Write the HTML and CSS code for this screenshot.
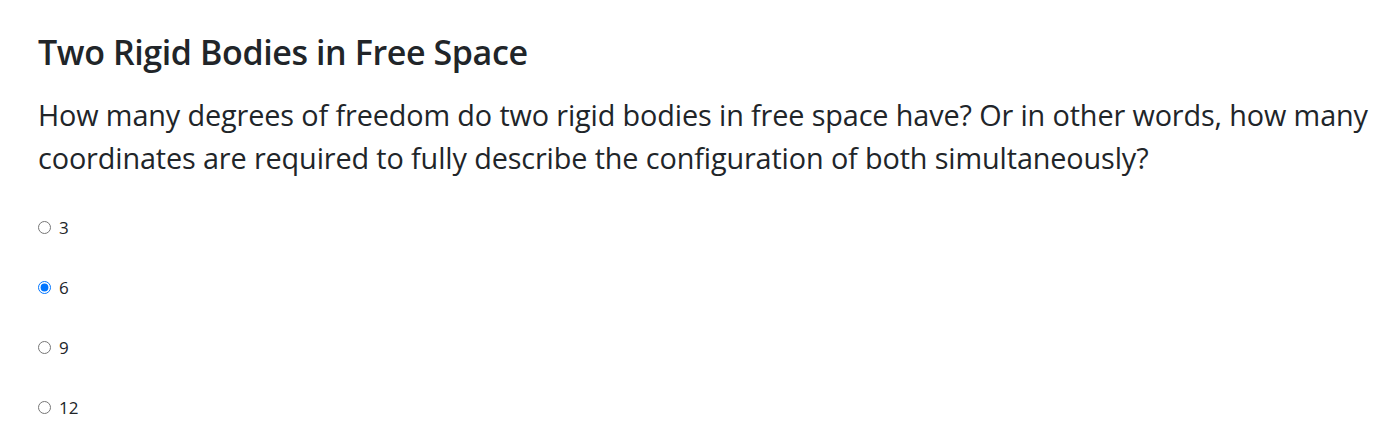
FILE: index.html
```html
<!DOCTYPE html>
<html lang="en">
<head>
<meta charset="utf-8">
<title>Two Rigid Bodies in Free Space</title>
<link rel="stylesheet" href="styles.css">
</head>
<body>
<main class="page">
  <h2 class="title">Two Rigid Bodies in Free Space</h2>
  <p class="question">How many degrees of freedom do two rigid bodies in free space have? Or in other words, how many coordinates are required to fully describe the configuration of both simultaneously?</p>
  <form class="options">
    <label class="option"><input type="radio" name="dof" value="3"><span>3</span></label>
    <label class="option"><input type="radio" name="dof" value="6" checked><span>6</span></label>
    <label class="option"><input type="radio" name="dof" value="9"><span>9</span></label>
    <label class="option"><input type="radio" name="dof" value="12"><span>12</span></label>
  </form>
</main>
</body>
</html>
```

FILE: styles.css
```css
html, body {
  margin: 0;
  padding: 0;
  background: #ffffff;
}
body {
  font-family: "Open Sans", "Noto Sans", "Liberation Sans", sans-serif;
  color: #212529;
}
.page {
  padding: 32px 20px 0 38px;
}
.title {
  margin: 0 0 20px 0;
  font-size: 34px;
  font-weight: 600;
  line-height: 1.2;
  letter-spacing: -0.4px;
}
.question {
  margin: 0 0 37px 0;
  font-size: 28.8px;
  line-height: 43px;
  font-weight: 400;
  letter-spacing: -0.12px;
}
.options {
  display: flex;
  flex-direction: column;
  gap: 36px;
}
.option {
  display: flex;
  align-items: center;
  gap: 8px;
  font-size: 17px;
  line-height: 24px;
}
.option input {
  margin: 0;
  width: 13px;
  height: 13px;
}
```
